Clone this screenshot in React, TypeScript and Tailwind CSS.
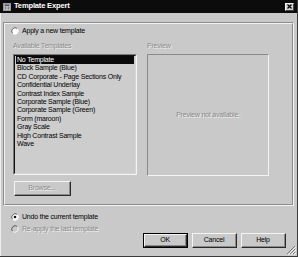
import React from "react";

function Radio({ checked = false, disabled = false }: { checked?: boolean; disabled?: boolean }) {
  return (
    <svg width="8" height="8" viewBox="0 0 8 8" className="shrink-0">
      <circle cx="4" cy="4" r="3.4" fill={disabled ? "#c8c8c8" : "#ffffff"} />
      <path d="M1.6 6.4 A3.4 3.4 0 0 1 6.4 1.6" stroke="#5a5a5a" strokeWidth="1" fill="none" />
      <path d="M6.4 1.6 A3.4 3.4 0 0 1 1.6 6.4" stroke="#f4f4f4" strokeWidth="1" fill="none" />
      {checked && <circle cx="4" cy="4" r="1.3" fill="#111" />}
    </svg>
  );
}

function Btn({ label, def = false, disabled = false, w = "w-[45px]" }: { label: string; def?: boolean; disabled?: boolean; w?: string }) {
  return (
    <div className={`${w} h-[15px] ${def ? "border border-black" : ""} flex`}>
      <div className="flex-1 border-t border-l border-[#f4f4f4] border-r border-b border-r-[#2a2a2a] border-b-[#2a2a2a] flex">
        <div className="flex-1 border-r border-b border-[#8a8a8a] flex items-center justify-center">
          <span className={disabled ? "text-[#8c8c8c] [text-shadow:1px_1px_0_#f2f2f2]" : "text-black"}>{label}</span>
        </div>
      </div>
    </div>
  );
}

const items = [
  "No Template",
  "Block Sample (Blue)",
  "CD Corporate - Page Sections Only",
  "Confidential Underlay",
  "Contrast Index Sample",
  "Corporate Sample (Blue)",
  "Corporate Sample (Green)",
  "Form (maroon)",
  "Gray Scale",
  "High Contrast Sample",
  "Wave",
];

export default function App() {
  return (
    <div className="w-[298px] h-[257px] bg-[#c9c9c9] flex flex-col relative overflow-hidden border-r border-b border-[#3a3a3a] font-['Liberation_Sans',Arial,sans-serif] text-[7px] tracking-[-0.2px] leading-[8.4px] text-black">
      {/* Title bar */}
      <div className="h-[13px] bg-[#0c0c0c] flex items-center pl-[3px] pr-[3px] shrink-0">
        <svg width="8" height="8" viewBox="0 0 8 8" className="shrink-0">
          <rect x="0.5" y="0.5" width="7" height="7" fill="#d8d8d8" stroke="#9a9a9a" />
          <rect x="1.5" y="1.5" width="5" height="1.3" fill="#333" />
          <rect x="1.5" y="3.6" width="2" height="1" fill="#555" />
          <rect x="4.5" y="3.6" width="2" height="1" fill="#555" />
          <rect x="1.5" y="5.4" width="2" height="1" fill="#555" />
          <rect x="4.5" y="5.4" width="2" height="1" fill="#555" />
        </svg>
        <span className="ml-[3px] text-white font-bold text-[7.6px] tracking-[-0.2px]">Template Expert</span>
        <div className="ml-auto w-[9px] h-[8px] bg-[#d4d4d4] border-t border-l border-[#f4f4f4] border-r border-b border-r-[#404040] border-b-[#404040] flex items-center justify-center">
          <svg width="5" height="5" viewBox="0 0 5 5">
            <path d="M0.5 0.5 L4.5 4.5 M4.5 0.5 L0.5 4.5" stroke="#000" strokeWidth="1.3" />
          </svg>
        </div>
      </div>

      {/* Body */}
      <div className="flex-1 flex flex-col border-l border-[#efefef]">
        {/* Group box */}
        <div className="mt-[9px] ml-[2px] w-[291px] h-[184px] border border-[#8c8c8c] border-r-[#f4f4f4] border-b-[#f4f4f4] flex">
          <div className="flex-1 border border-[#f4f4f4] border-r-[#8c8c8c] border-b-[#8c8c8c] flex flex-col">
            <div className="mt-[3px] ml-[6px] h-[8px] flex items-center gap-[3px]">
              <Radio />
              <span>Apply a new template</span>
            </div>
            <div className="mt-[7px] ml-[8px] h-[8px] flex">
              <span className="w-[134px] text-[#8c8c8c] [text-shadow:1px_1px_0_#efefef]">Available Templates</span>
              <span className="text-[#8c8c8c] [text-shadow:1px_1px_0_#efefef]">Preview</span>
            </div>
            <div className="mt-[4px] ml-[8px] flex gap-[10px] items-start">
              <div className="flex flex-col">
                <div className="w-[124px] h-[121px] border border-[#7a7a7a] border-r-[#f4f4f4] border-b-[#f4f4f4] flex">
                  <div className="flex-1 border border-[#101010] border-r-[#d6d6d6] border-b-[#d6d6d6] bg-[#cdcdcd] flex flex-col pl-[1px] pr-[1px]">
                    {items.map((it, i) => (
                      <div
                        key={it}
                        className={`h-[8.4px] pl-[1px] whitespace-nowrap ${i === 0 ? "bg-[#0a0a0a] text-white" : ""}`}
                      >
                        {it}
                      </div>
                    ))}
                  </div>
                </div>
                <div className="mt-[6px] ml-[1px]">
                  <Btn label="Browse..." disabled w="w-[57px]" />
                </div>
              </div>
              <div className="w-[122px] h-[122px] border border-[#8a8a8a] border-r-[#f4f4f4] border-b-[#f4f4f4] flex items-center justify-center">
                <span className="text-[#8a8a8a] [text-shadow:1px_1px_0_#efefef]">Preview not available.</span>
              </div>
            </div>
          </div>
        </div>

        {/* Bottom radios */}
        <div className="mt-[7px] ml-[10px] h-[8px] flex items-center gap-[3px]">
          <Radio checked />
          <span>Undo the current template</span>
        </div>
        <div className="mt-[4px] ml-[10px] h-[8px] flex items-center gap-[3px]">
          <Radio disabled />
          <span className="text-[#8c8c8c] [text-shadow:1px_1px_0_#efefef]">Re-apply the last template</span>
        </div>

        {/* Buttons */}
        <div className="flex justify-end gap-[4px] pr-[11px]">
          <Btn label="OK" def />
          <Btn label="Cancel" />
          <Btn label="Help" />
        </div>
      </div>

      {/* Size grip */}
      <svg width="10" height="10" viewBox="0 0 10 10" className="absolute right-[1px] bottom-[1px]">
        <path d="M9 1 L1 9 M9 4 L4 9 M9 7 L7 9" stroke="#7a7a7a" strokeWidth="1" />
        <path d="M10 2 L2 10 M10 5 L5 10 M10 8 L8 10" stroke="#f4f4f4" strokeWidth="1" />
      </svg>
    </div>
  );
}
